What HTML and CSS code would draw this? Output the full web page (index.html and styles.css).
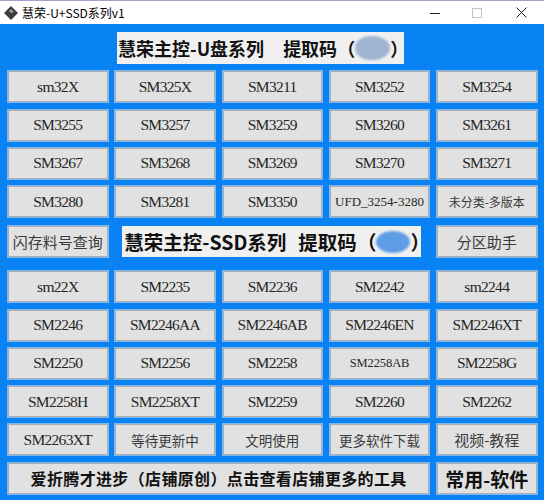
FILE: index.html
```html
<!DOCTYPE html>
<html lang="zh-CN">
<head>
<meta charset="utf-8">
<title>慧荣-U+SSD系列v1</title>
<link rel="stylesheet" href="styles.css">
</head>
<body>
<div class="window">
  <div class="titlebar">
    <svg class="appicon" width="16" height="16" viewBox="0 0 16 16">
      <path d="M8 1 L15 8 L8 15 L1 8 Z" fill="#3c3c3c"/>
      <path d="M8 4 L11 7 L8 8 L6 6 Z" fill="#9a9a9a"/>
    </svg>
    <span class="title-text">慧荣-U+SSD系列v1</span>
    <div class="controls">
      <span class="ctl"><svg width="10" height="10" viewBox="0 0 10 10"><path d="M0 5.5 H10" stroke="#222" stroke-width="1"/></svg></span>
      <span class="ctl"><svg width="10" height="10" viewBox="0 0 10 10"><rect x="0.5" y="0.5" width="9" height="9" fill="none" stroke="#c4c4c4" stroke-width="1"/></svg></span>
      <span class="ctl"><svg width="11" height="11" viewBox="0 0 11 11"><path d="M0.5 0.5 L10.5 10.5 M10.5 0.5 L0.5 10.5" stroke="#222" stroke-width="1"/></svg></span>
    </div>
  </div>
  <div class="main">
    <div class="hdr hdr-u">
      <span>慧荣主控-U盘系列</span><span class="sp-u">提取码</span><span>（</span><span class="blob blob-u"></span><span>）</span>
    </div>
    <div class="row">
      <div class="btn mono">sm32X</div>
      <div class="btn mono">SM325X</div>
      <div class="btn mono">SM3211</div>
      <div class="btn mono">SM3252</div>
      <div class="btn mono">SM3254</div>
    </div>
    <div class="row">
      <div class="btn mono">SM3255</div>
      <div class="btn mono">SM3257</div>
      <div class="btn mono">SM3259</div>
      <div class="btn mono">SM3260</div>
      <div class="btn mono">SM3261</div>
    </div>
    <div class="row">
      <div class="btn mono">SM3267</div>
      <div class="btn mono">SM3268</div>
      <div class="btn mono">SM3269</div>
      <div class="btn mono">SM3270</div>
      <div class="btn mono">SM3271</div>
    </div>
    <div class="row">
      <div class="btn mono">SM3280</div>
      <div class="btn mono">SM3281</div>
      <div class="btn mono">SM3350</div>
      <div class="btn mono small">UFD_3254-3280</div>
      <div class="btn cn cn12">未分类-多版本</div>
    </div>
    <div class="row row-ssd">
      <div class="btn cn cn15">闪存料号查询</div>
      <div class="hdr hdr-ssd">
        <span>慧荣主控-SSD系列</span><span class="sp-s">提取码</span><span>（</span><span class="blob blob-s"></span><span>）</span>
      </div>
      <div class="btn cn cn15">分区助手</div>
    </div>
    <div class="row row-first-ssd">
      <div class="btn mono">sm22X</div>
      <div class="btn mono">SM2235</div>
      <div class="btn mono">SM2236</div>
      <div class="btn mono">SM2242</div>
      <div class="btn mono">sm2244</div>
    </div>
    <div class="row">
      <div class="btn mono">SM2246</div>
      <div class="btn mono">SM2246AA</div>
      <div class="btn mono">SM2246AB</div>
      <div class="btn mono">SM2246EN</div>
      <div class="btn mono">SM2246XT</div>
    </div>
    <div class="row">
      <div class="btn mono">SM2250</div>
      <div class="btn mono">SM2256</div>
      <div class="btn mono">SM2258</div>
      <div class="btn mono small2">SM2258AB</div>
      <div class="btn mono">SM2258G</div>
    </div>
    <div class="row">
      <div class="btn mono">SM2258H</div>
      <div class="btn mono">SM2258XT</div>
      <div class="btn mono">SM2259</div>
      <div class="btn mono">SM2260</div>
      <div class="btn mono">SM2262</div>
    </div>
    <div class="row">
      <div class="btn mono">SM2263XT</div>
      <div class="btn cn cn13">等待更新中</div>
      <div class="btn cn cn13">文明使用</div>
      <div class="btn cn cn13">更多软件下载</div>
      <div class="btn cn cn15">视频-教程</div>
    </div>
    <div class="row">
      <div class="btn wide bold16">爱折腾才进步（店铺原创）点击查看店铺更多的工具</div>
      <div class="btn bold19">常用-软件</div>
    </div>
  </div>
</div>
</body>
</html>
```

FILE: styles.css
```css
html, body {
  margin: 0;
  padding: 0;
}
body {
  width: 544px;
  height: 500px;
  overflow: hidden;
  background: #0982f4;
}
.window {
  width: 544px;
  height: 500px;
  display: flex;
  flex-direction: column;
}
.titlebar {
  height: 24px;
  flex: none;
  background: #ffffff;
  border-top: 1px solid #a99ccf;
  box-sizing: border-box;
  display: flex;
  align-items: center;
  font-family: "Noto Sans CJK SC", "Noto Sans", sans-serif;
  font-size: 12px;
  color: #000;
}
.appicon {
  margin-left: 3px;
  margin-right: 3px;
}
.title-text {
  line-height: 1;
}
.controls {
  margin-left: auto;
  display: flex;
  height: 100%;
}
.ctl {
  width: 42px;
  display: flex;
  align-items: center;
  justify-content: center;
}
.ctl:last-child {
  width: 46px;
}
.main {
  flex: 1;
  background: #0982f4;
  padding: 8px 7px 0 8px;
  display: flex;
  flex-direction: column;
  gap: 7.3px;
}
.row {
  display: grid;
  grid-template-columns: repeat(5, 99.5px);
  column-gap: 7.75px;
  height: 31px;
}
.row-ssd {
  margin-top: 1.8px;
}
.row-first-ssd {
  margin-top: 6.7px;
}
.btn {
  box-sizing: border-box;
  height: 31px;
  background: #e1e1e1;
  border: 1px solid #adadad;
  box-shadow: 0 0 0 1px #7fb9f3;
  display: flex;
  align-items: center;
  justify-content: center;
  color: #1e1e1e;
  white-space: nowrap;
  overflow: hidden;
}
.mono {
  font-family: "Liberation Serif", serif;
  font-size: 15.5px;
  letter-spacing: -0.7px;
  color: #262626;
}
.small {
  font-size: 13px;
  letter-spacing: 0;
}
.small2 {
  font-size: 12.5px;
  letter-spacing: -0.1px;
}
.cn {
  font-family: "Noto Sans CJK SC", sans-serif;
  color: #3a3a3a;
}
.cn12 { font-size: 12px; }
.cn13 { font-size: 13.5px; }
.cn15 { font-size: 15px; }
.wide {
  grid-column: 1 / span 4;
}
.bold16 {
  font-family: "Noto Sans CJK SC", sans-serif;
  font-weight: bold;
  font-size: 16px;
  letter-spacing: 0.35px;
  color: #111;
}
.bold19 {
  font-family: "Noto Sans CJK SC", sans-serif;
  font-weight: bold;
  font-size: 19px;
  color: #111;
}
.hdr {
  box-sizing: border-box;
  background: #f0f0f0;
  display: flex;
  align-items: center;
  font-family: "Noto Sans CJK SC", sans-serif;
  font-weight: bold;
  color: #111;
  white-space: nowrap;
  line-height: 1;
}
.hdr > span {
  flex: none;
}
.hdr-u {
  height: 32px;
  width: 287px;
  margin-left: 109px;
  font-size: 18px;
  padding-left: 1px;
  flex: none;
}
.sp-u {
  margin-left: 19px;
}
.hdr-ssd {
  grid-column: 2 / span 3;
  margin-left: 7px;
  margin-right: 8px;
  height: 31px;
  font-size: 19.5px;
  padding-left: 2px;
}
.sp-s {
  margin-left: 12px;
}
.blob {
  display: inline-block;
  filter: blur(1px);
}
.blob-u {
  width: 35px;
  height: 24px;
  border-radius: 45% 50% 50% 45% / 50%;
  background: #a1b4d1;
}
.blob-s {
  width: 34px;
  height: 22px;
  border-radius: 50%;
  background: #5c9de6;
}
```
